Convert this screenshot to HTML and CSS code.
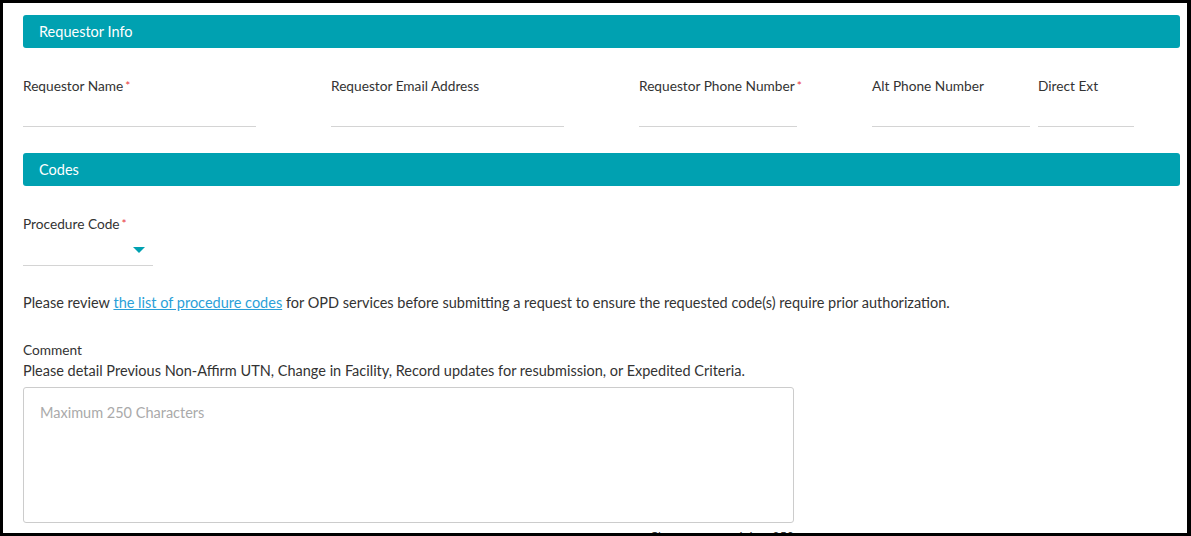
FILE: index.html
```html
<!DOCTYPE html>
<html lang="en">
<head>
  <meta charset="UTF-8">
  <title>Request – Requestor Info</title>
  <link rel="stylesheet" href="styles.css">
</head>
<body>
  <div class="frame">
    <div class="section-bar">Requestor Info</div>
    <div class="field-row">
      <div class="field f-name">
        <label>Requestor Name<span class="req">*</span></label>
        <input type="text">
      </div>
      <div class="field f-email">
        <label>Requestor Email Address</label>
        <input type="text">
      </div>
      <div class="field f-phone">
        <label>Requestor Phone Number<span class="req">*</span></label>
        <input type="text">
      </div>
      <div class="field f-alt">
        <label>Alt Phone Number</label>
        <input type="text">
      </div>
      <div class="field f-ext">
        <label>Direct Ext</label>
        <input type="text">
      </div>
    </div>

    <div class="section-bar">Codes</div>
    <div class="field f-code">
      <label>Procedure Code<span class="req">*</span></label>
      <div class="select-box"><span class="caret"></span></div>
    </div>

    <p class="note">Please review <a href="#">the list of procedure codes</a> for OPD services before submitting a request to ensure the requested code(s) require prior authorization.</p>

    <div class="comment">
      <label>Comment</label>
      <div class="hint">Please detail Previous Non-Affirm UTN, Change in Facility, Record updates for resubmission, or Expedited Criteria.</div>
      <textarea placeholder="Maximum 250 Characters"></textarea>
      <div class="counter">Characters remaining: 250</div>
    </div>
  </div>
</body>
</html>
```

FILE: styles.css
```css
html { background: #000; }
body { margin: 3px 4px 3px 3px; font-family: Lato, 'Open Sans', Arial, sans-serif; font-size: 14.5px; color: #333; }
.frame { background: #fff; height: 530px; overflow: hidden; padding: 12px 7px 0 20px; box-sizing: border-box; }
.section-bar { background: #00a1b1; color: #fff; font-size: 14.5px; height: 33px; line-height: 33px; padding: 0 16px; border-radius: 3px; }
.field-row { display: flex; margin: 28px 0 26px 0; }
.field label { display: block; line-height: 20px; font-size: 13.7px; white-space: nowrap; }
.req { color: #e8383d; margin-left: 2px; font-size: 12px; vertical-align: top; }
.field input { display: block; width: 100%; height: 31px; border: none; border-bottom: 1px solid #d4d4d4; outline: none; padding: 0; box-sizing: border-box; font: inherit; }
.f-name, .f-email { width: 233px; margin-right: 75px; }
.f-phone { width: 158px; margin-right: 75px; }
.f-alt { width: 158px; margin-right: 8px; }
.f-ext { width: 96px; }
.f-code { width: 130px; margin-top: 28px; }
.select-box { height: 32px; border-bottom: 1px solid #d4d4d4; box-sizing: border-box; display: flex; justify-content: flex-end; align-items: center; padding-right: 8px; }
.caret { width: 0; height: 0; border-left: 6px solid transparent; border-right: 6px solid transparent; border-top: 6px solid #00a1b1; }
.note { margin: 27px 0 0 0; line-height: 20px; }
.note a { color: #2a9fd8; }
.comment { margin-top: 27px; width: 771px; }
.comment label { display: block; line-height: 20px; font-size: 13.7px; }
.hint { line-height: 22px; }
.comment textarea { display: block; margin-top: 5px; width: 100%; height: 136px; border: 1px solid #ccc; border-radius: 3px; box-sizing: border-box; padding: 16px 16px; font: inherit; resize: none; }
.comment textarea::placeholder { color: #aaa; }
.counter { text-align: right; font-size: 12.5px; margin-top: 7px; }
```
